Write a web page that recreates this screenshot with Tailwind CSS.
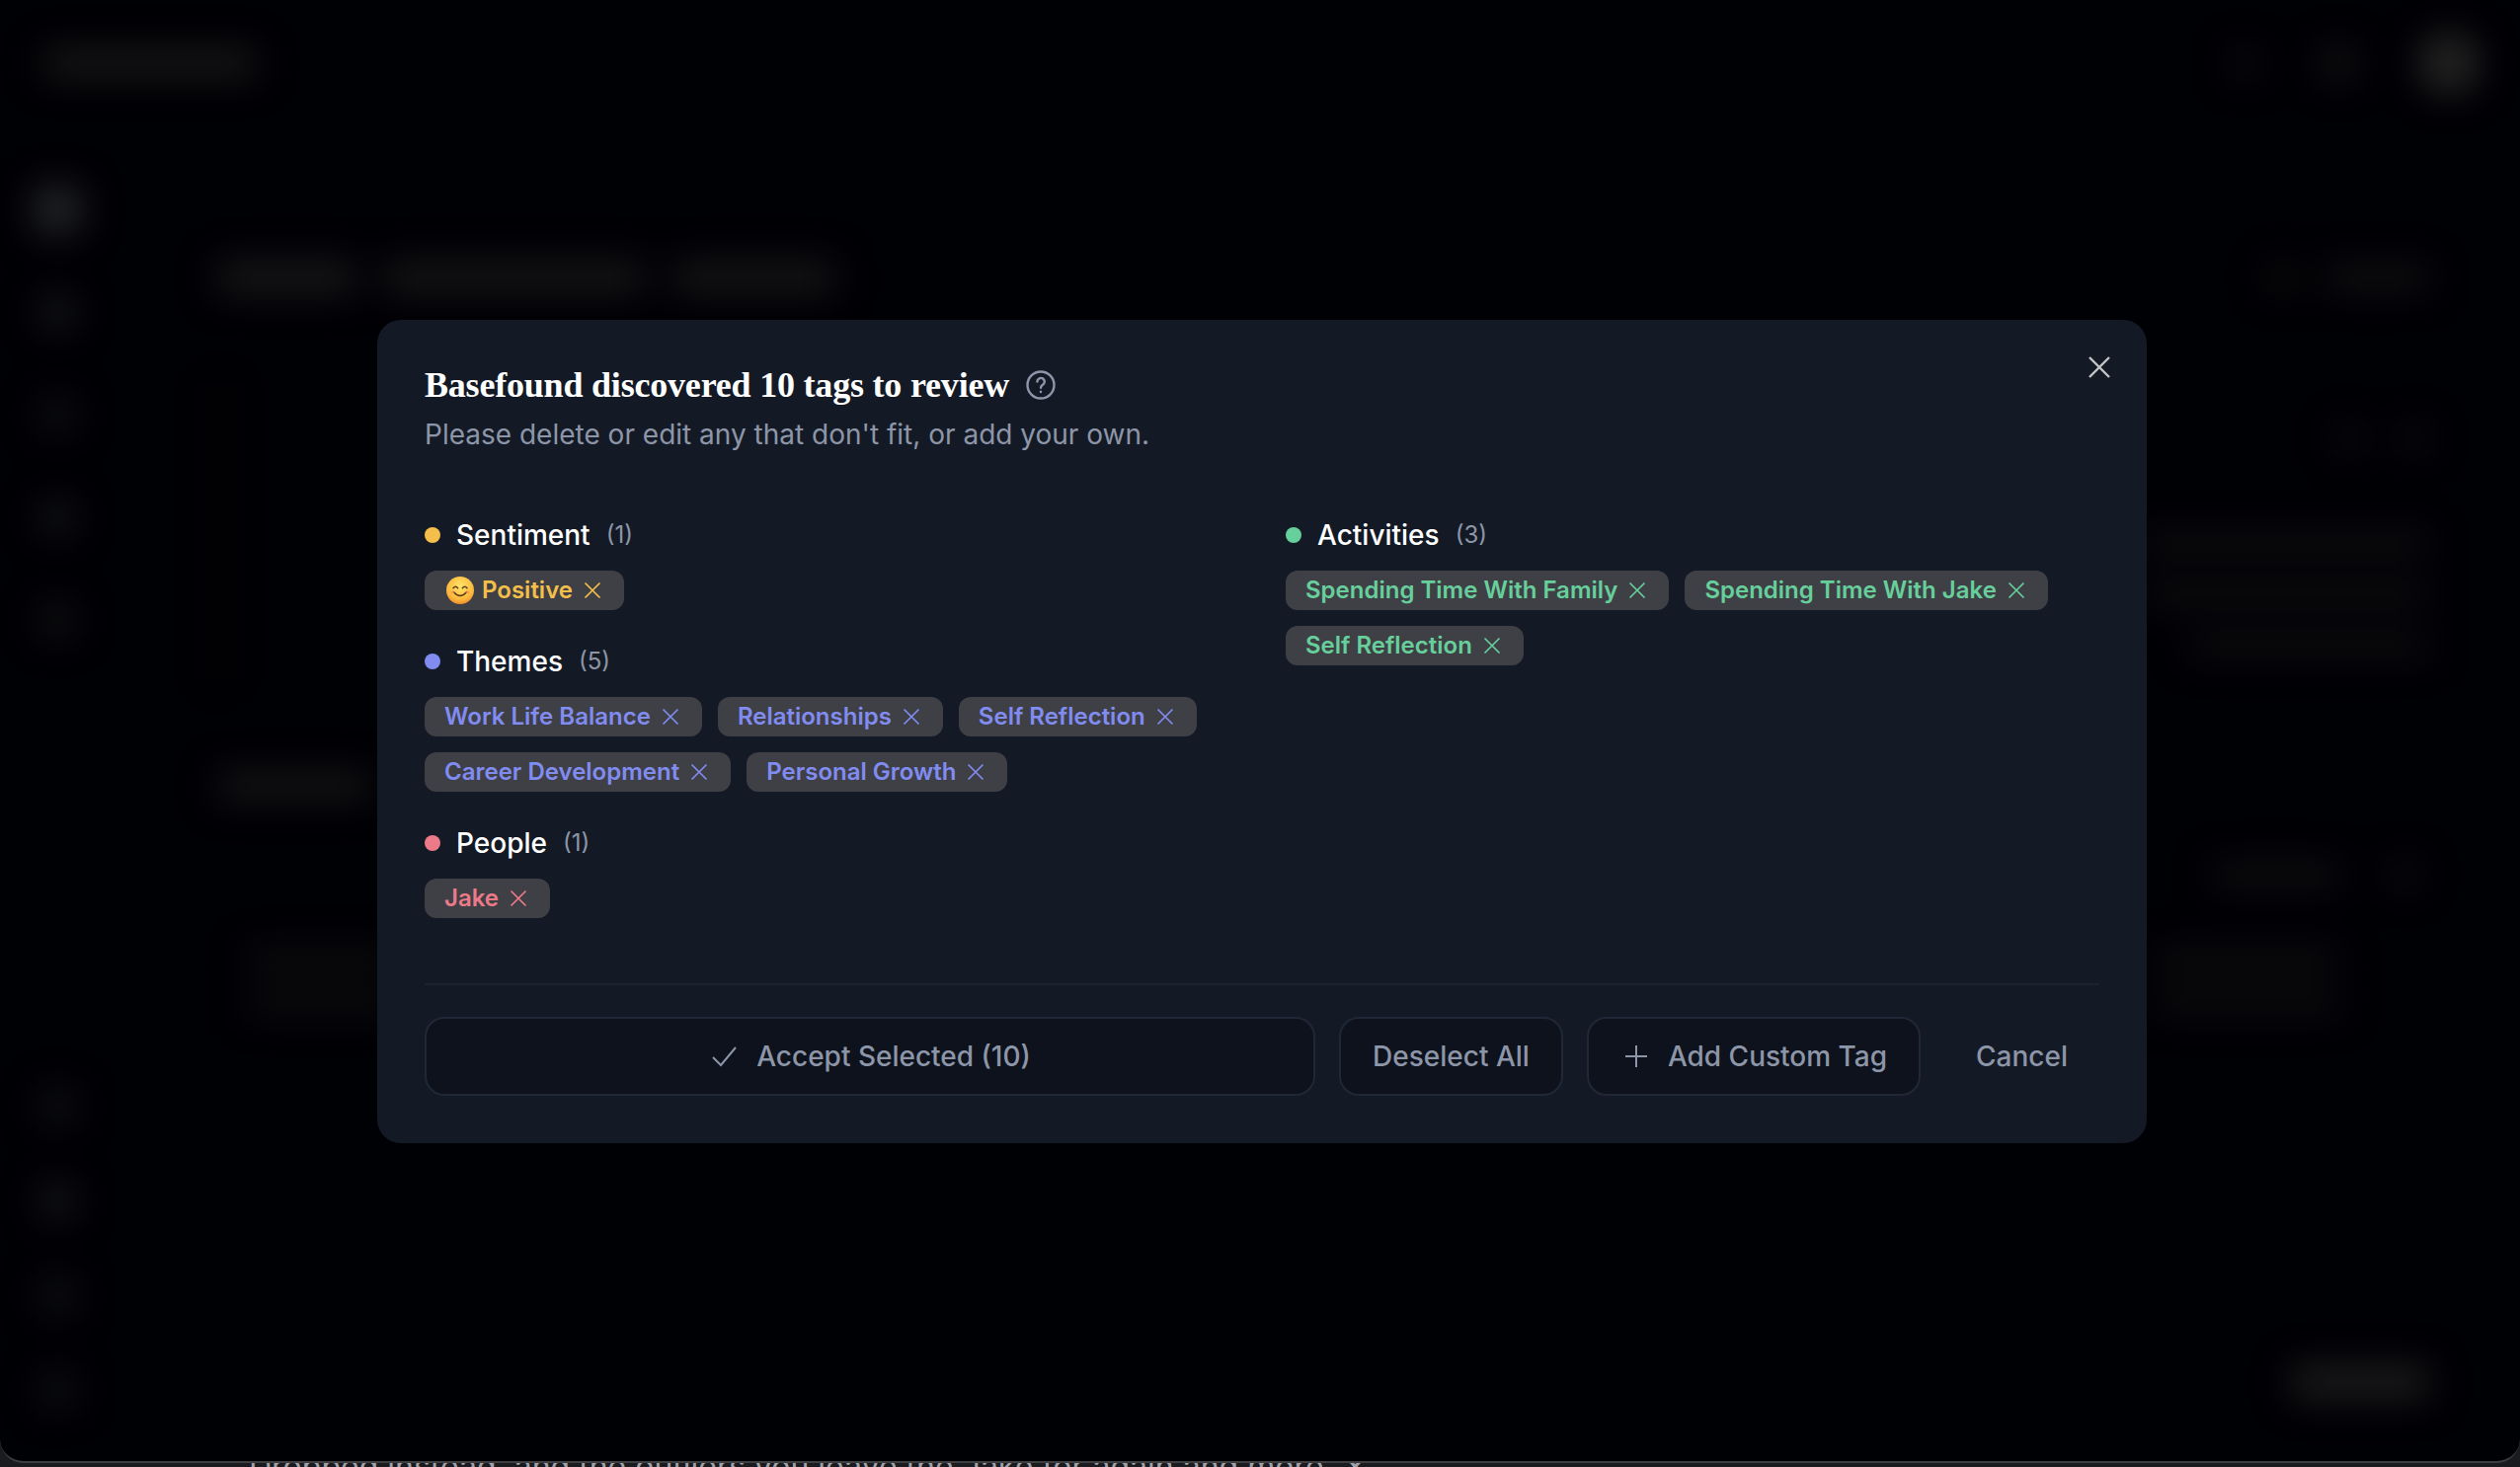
<!DOCTYPE html>
<html lang="en">
<head>
  <meta charset="UTF-8">
  <title>Basefound - Review tags</title>
  <script src="https://cdn.jsdelivr.net/npm/@tailwindcss/browser@4"></script>
</head>
<body class="bg-[#1a1b1e] font-['Inter',sans-serif]">
  <div class="relative w-[2552px] h-[1486px] overflow-hidden">

    <!-- Text of the page below the window, cut off by the window edge -->
    <p class="absolute left-[252px] top-[1468px] text-[32px] leading-9 text-[#a1a1aa] whitespace-nowrap">Dropped instead, and the outliers you leave the Jake for again and more. ✕</p>

    <!-- Window behind the dialog, blurred and dimmed -->
    <div class="absolute inset-x-0 top-0 h-[1482px] rounded-b-[24px] border-b-2 border-[#3f3f42] bg-[#000105] overflow-hidden">
      <div class="flex flex-col h-full blur-[18px]">
        <header class="flex items-center justify-between h-[128px] pl-[44px] pr-[40px]">
          <div class="w-[216px] h-[30px] bg-[#171717] rounded"></div>
          <div class="flex items-center gap-[60px]">
            <div class="w-[30px] h-[30px] rounded-full bg-[#0e0e10]"></div>
            <div class="w-[40px] h-[40px] rounded-full bg-[#111113]"></div>
            <div class="w-[64px] h-[64px] rounded-full bg-[#222222]"></div>
          </div>
        </header>
        <div class="flex flex-1">
          <aside class="flex flex-col items-center w-[116px] pt-[67px]">
            <div class="flex flex-col items-center gap-[70px]">
              <div class="w-[50px] h-[50px] -my-2 rounded-xl bg-[#222326]"></div>
              <div class="w-[34px] h-[34px] rounded-lg bg-[#17181a]"></div>
              <div class="w-[34px] h-[34px] rounded-lg bg-[#101113]"></div>
              <div class="w-[34px] h-[34px] rounded-lg bg-[#141517]"></div>
              <div class="w-[34px] h-[34px] rounded-lg bg-[#111214]"></div>
            </div>
            <div class="mt-[458px] flex flex-col items-center gap-[62px]">
              <div class="w-[34px] h-[34px] rounded-lg bg-[#111214]"></div>
              <div class="w-[34px] h-[34px] rounded-lg bg-[#17181a]"></div>
              <div class="w-[34px] h-[34px] rounded-lg bg-[#111214]"></div>
              <div class="w-[34px] h-[34px] rounded-lg bg-[#101113]"></div>
            </div>
          </aside>
          <main class="flex-1 flex flex-col pl-[104px] pr-[92px]">
            <div class="mt-[135px] flex items-center justify-between">
              <div class="flex gap-[28px]">
                <div class="w-[140px] h-[36px] bg-[#161618] rounded"></div>
                <div class="w-[265px] h-[36px] bg-[#141416] rounded"></div>
                <div class="w-[165px] h-[36px] bg-[#141416] rounded"></div>
              </div>
              <div class="flex items-center gap-[30px]">
                <div class="w-[28px] h-[28px] rounded bg-[#0e0e0c]"></div>
                <div class="w-[105px] h-[26px] rounded bg-[#101012]"></div>
              </div>
            </div>
            <div class="mt-[90px] h-[300px] border-l-4 border-[#0f0d05] flex justify-end pt-[40px]">
              <div class="flex flex-col items-end gap-[30px] w-[290px]">
                <div class="flex gap-[36px]">
                  <div class="w-[30px] h-[30px] rounded-full bg-[#0e0e10]"></div>
                  <div class="w-[30px] h-[30px] rounded-full bg-[#0e0e10]"></div>
                </div>
                <div class="mt-[50px] w-full h-[22px] rounded bg-[#0f0f11]"></div>
                <div class="w-full h-[22px] rounded bg-[#0e0e10]"></div>
                <div class="w-[84%] h-[22px] rounded bg-[#0e0e10]"></div>
              </div>
            </div>
            <div class="mt-[92px] w-[155px] h-[30px] rounded bg-[#141416]"></div>
            <div class="mt-[60px] flex justify-end items-center gap-[50px] pr-[10px]">
              <div class="w-[130px] h-[24px] rounded bg-[#0f0f11]"></div>
              <div class="w-[30px] h-[30px] rounded-full bg-[#0f0f11]"></div>
            </div>
            <div class="mt-[60px] flex justify-between">
              <div class="ml-[30px] flex flex-col gap-[22px] w-[150px]">
                <div class="h-[22px] rounded bg-[#0e0e10]"></div>
                <div class="h-[22px] rounded bg-[#0e0e10]"></div>
              </div>
              <div class="flex flex-col gap-[22px] w-[190px] mr-[90px]">
                <div class="h-[22px] rounded bg-[#0e0e10]"></div>
                <div class="h-[22px] rounded bg-[#0d0d0f]"></div>
              </div>
            </div>
            <div class="mt-auto mb-[62px] self-end w-[140px] h-[36px] rounded bg-[#1a1a1b]"></div>
          </main>
        </div>
      </div>
    </div>

    <!-- Dialog -->
    <div class="absolute left-[382px] top-[324px] w-[1792px] h-[834px] rounded-[24px] bg-[#141a25] px-[48px] pt-[46px] pb-[48px] flex flex-col">
      <button class="absolute right-[32px] top-[32px] text-[#c4c5c9]">
        <svg class="w-8 h-8" viewBox="0 0 32 32" fill="none" stroke="currentColor" stroke-width="2.4"><path d="M6 6l20 20M26 6L6 26"/></svg>
      </button>

      <div class="flex items-center gap-[16px]">
        <h2 class="font-['Liberation_Serif',serif] font-bold text-[36px] leading-[40px] tracking-[-0.2px] text-white">Basefound discovered 10 tags to review</h2>
        <svg class="w-8 h-8 text-[#8d96a8]" viewBox="0 0 32 32" fill="none" stroke="currentColor" stroke-width="2.4" stroke-linecap="round"><circle cx="16" cy="16" r="13.5"/><path d="M12.4 12.6a3.7 3.7 0 1 1 5.6 3.2c-1.3.8-2 1.5-2 3"/><path d="M16 22.8v.2"/></svg>
      </div>
      <p class="mt-[10px] text-[28px] leading-[40px] text-[#8d96a8]">Please delete or edit any that don't fit, or add your own.</p>

      <div class="mt-[62px] grid grid-cols-2 gap-x-[48px] flex-1">
        <div class="flex flex-col gap-[32px]">
          <section>
            <div class="flex items-center h-[40px]">
              <span class="w-4 h-4 rounded-full bg-[#f3bf4a]"></span>
              <span class="ml-4 text-[28px] font-medium text-white">Sentiment</span>
              <span class="ml-4 text-[24px] text-[#8d96a8]">(1)</span>
            </div>
            <div class="mt-[16px] flex flex-wrap gap-[16px]">
              <span class="h-[40px] pl-[22px] pr-[20px] flex items-center gap-[8px] rounded-xl bg-[#3f3f46] text-[24px] font-semibold text-[#f3bf4a]">
                <svg class="w-[28px] h-[28px]" viewBox="0 0 30 30"><defs><radialGradient id="face" cx="50%" cy="35%" r="70%"><stop offset="0" stop-color="#ffe46b"/><stop offset="0.7" stop-color="#fbb93b"/><stop offset="1" stop-color="#ee7d2a"/></radialGradient></defs><circle cx="15" cy="15" r="15" fill="url(#face)"/><path d="M7.5 12.5q2.5-3 5 0M17.5 12.5q2.5-3 5 0" fill="none" stroke="#5d3a16" stroke-width="1.6" stroke-linecap="round"/><path d="M8 17q7 8 14 0" fill="none" stroke="#5d3a16" stroke-width="1.6" stroke-linecap="round"/><ellipse cx="7" cy="17" rx="2.4" ry="1.4" fill="#f58a5a" opacity=".6"/><ellipse cx="23" cy="17" rx="2.4" ry="1.4" fill="#f58a5a" opacity=".6"/></svg>
                Positive
                <svg class="w-[24px] h-[24px]" viewBox="0 0 24 24" fill="none" stroke="currentColor" stroke-width="1.7"><path d="M4.5 4.5l15 15M19.5 4.5l-15 15"/></svg>
              </span>
            </div>
          </section>
          <section>
            <div class="flex items-center h-[40px]">
              <span class="w-4 h-4 rounded-full bg-[#818cf0]"></span>
              <span class="ml-4 text-[28px] font-medium text-white">Themes</span>
              <span class="ml-4 text-[24px] text-[#8d96a8]">(5)</span>
            </div>
            <div class="mt-[16px] flex flex-wrap gap-[16px] text-[#818cf0]">
              <span class="h-[40px] pl-[20px] pr-[20px] flex items-center gap-[8px] rounded-xl bg-[#3f3f46] text-[24px] font-semibold">Work Life Balance <svg class="w-[24px] h-[24px]" viewBox="0 0 24 24" fill="none" stroke="currentColor" stroke-width="1.7"><path d="M4.5 4.5l15 15M19.5 4.5l-15 15"/></svg></span>
              <span class="h-[40px] pl-[20px] pr-[20px] flex items-center gap-[8px] rounded-xl bg-[#3f3f46] text-[24px] font-semibold">Relationships <svg class="w-[24px] h-[24px]" viewBox="0 0 24 24" fill="none" stroke="currentColor" stroke-width="1.7"><path d="M4.5 4.5l15 15M19.5 4.5l-15 15"/></svg></span>
              <span class="h-[40px] pl-[20px] pr-[20px] flex items-center gap-[8px] rounded-xl bg-[#3f3f46] text-[24px] font-semibold">Self Reflection <svg class="w-[24px] h-[24px]" viewBox="0 0 24 24" fill="none" stroke="currentColor" stroke-width="1.7"><path d="M4.5 4.5l15 15M19.5 4.5l-15 15"/></svg></span>
              <span class="h-[40px] pl-[20px] pr-[20px] flex items-center gap-[8px] rounded-xl bg-[#3f3f46] text-[24px] font-semibold">Career Development <svg class="w-[24px] h-[24px]" viewBox="0 0 24 24" fill="none" stroke="currentColor" stroke-width="1.7"><path d="M4.5 4.5l15 15M19.5 4.5l-15 15"/></svg></span>
              <span class="h-[40px] pl-[20px] pr-[20px] flex items-center gap-[8px] rounded-xl bg-[#3f3f46] text-[24px] font-semibold">Personal Growth <svg class="w-[24px] h-[24px]" viewBox="0 0 24 24" fill="none" stroke="currentColor" stroke-width="1.7"><path d="M4.5 4.5l15 15M19.5 4.5l-15 15"/></svg></span>
            </div>
          </section>
          <section>
            <div class="flex items-center h-[40px]">
              <span class="w-4 h-4 rounded-full bg-[#ec7a88]"></span>
              <span class="ml-4 text-[28px] font-medium text-white">People</span>
              <span class="ml-4 text-[24px] text-[#8d96a8]">(1)</span>
            </div>
            <div class="mt-[16px] flex flex-wrap gap-[16px] text-[#ec7a88]">
              <span class="h-[40px] pl-[20px] pr-[20px] flex items-center gap-[8px] rounded-xl bg-[#3f3f46] text-[24px] font-semibold">Jake <svg class="w-[24px] h-[24px]" viewBox="0 0 24 24" fill="none" stroke="currentColor" stroke-width="1.7"><path d="M4.5 4.5l15 15M19.5 4.5l-15 15"/></svg></span>
            </div>
          </section>
        </div>
        <section>
          <div class="flex items-center h-[40px]">
            <span class="w-4 h-4 rounded-full bg-[#66cf9b]"></span>
            <span class="ml-4 text-[28px] font-medium text-white">Activities</span>
            <span class="ml-4 text-[24px] text-[#8d96a8]">(3)</span>
          </div>
          <div class="mt-[16px] flex flex-wrap gap-[16px] text-[#66cf9b]">
            <span class="h-[40px] pl-[20px] pr-[20px] flex items-center gap-[8px] rounded-xl bg-[#3f3f46] text-[24px] font-semibold">Spending Time With Family <svg class="w-[24px] h-[24px]" viewBox="0 0 24 24" fill="none" stroke="currentColor" stroke-width="1.7"><path d="M4.5 4.5l15 15M19.5 4.5l-15 15"/></svg></span>
            <span class="h-[40px] pl-[20px] pr-[20px] flex items-center gap-[8px] rounded-xl bg-[#3f3f46] text-[24px] font-semibold">Spending Time With Jake <svg class="w-[24px] h-[24px]" viewBox="0 0 24 24" fill="none" stroke="currentColor" stroke-width="1.7"><path d="M4.5 4.5l15 15M19.5 4.5l-15 15"/></svg></span>
            <span class="h-[40px] pl-[20px] pr-[20px] flex items-center gap-[8px] rounded-xl bg-[#3f3f46] text-[24px] font-semibold">Self Reflection <svg class="w-[24px] h-[24px]" viewBox="0 0 24 24" fill="none" stroke="currentColor" stroke-width="1.7"><path d="M4.5 4.5l15 15M19.5 4.5l-15 15"/></svg></span>
          </div>
        </section>
      </div>

      <div class="border-t-2 border-[#1c2230] pt-[32px] flex items-center gap-[24px] text-[28px] font-medium text-[#8d96a8]">
        <button class="flex-1 h-[80px] flex items-center justify-center gap-[16px] rounded-[20px] border-2 border-[#202838] bg-[#0d121c]">
          <svg class="w-8 h-8" viewBox="0 0 32 32" fill="none" stroke="currentColor" stroke-width="2"><path d="M4 17l8 8L27 7"/></svg>
          Accept Selected (10)
        </button>
        <button class="h-[80px] px-[32px] rounded-[20px] border-2 border-[#202838] bg-[#0d121c]">Deselect All</button>
        <button class="h-[80px] px-[32px] flex items-center gap-[16px] rounded-[20px] border-2 border-[#202838] bg-[#0d121c]">
          <svg class="w-8 h-8" viewBox="0 0 32 32" fill="none" stroke="currentColor" stroke-width="2"><path d="M16 5v22M5 16h22"/></svg>
          Add Custom Tag
        </button>
        <button class="h-[80px] px-[32px]">Cancel</button>
      </div>
    </div>
  </div>
</body>
</html>
